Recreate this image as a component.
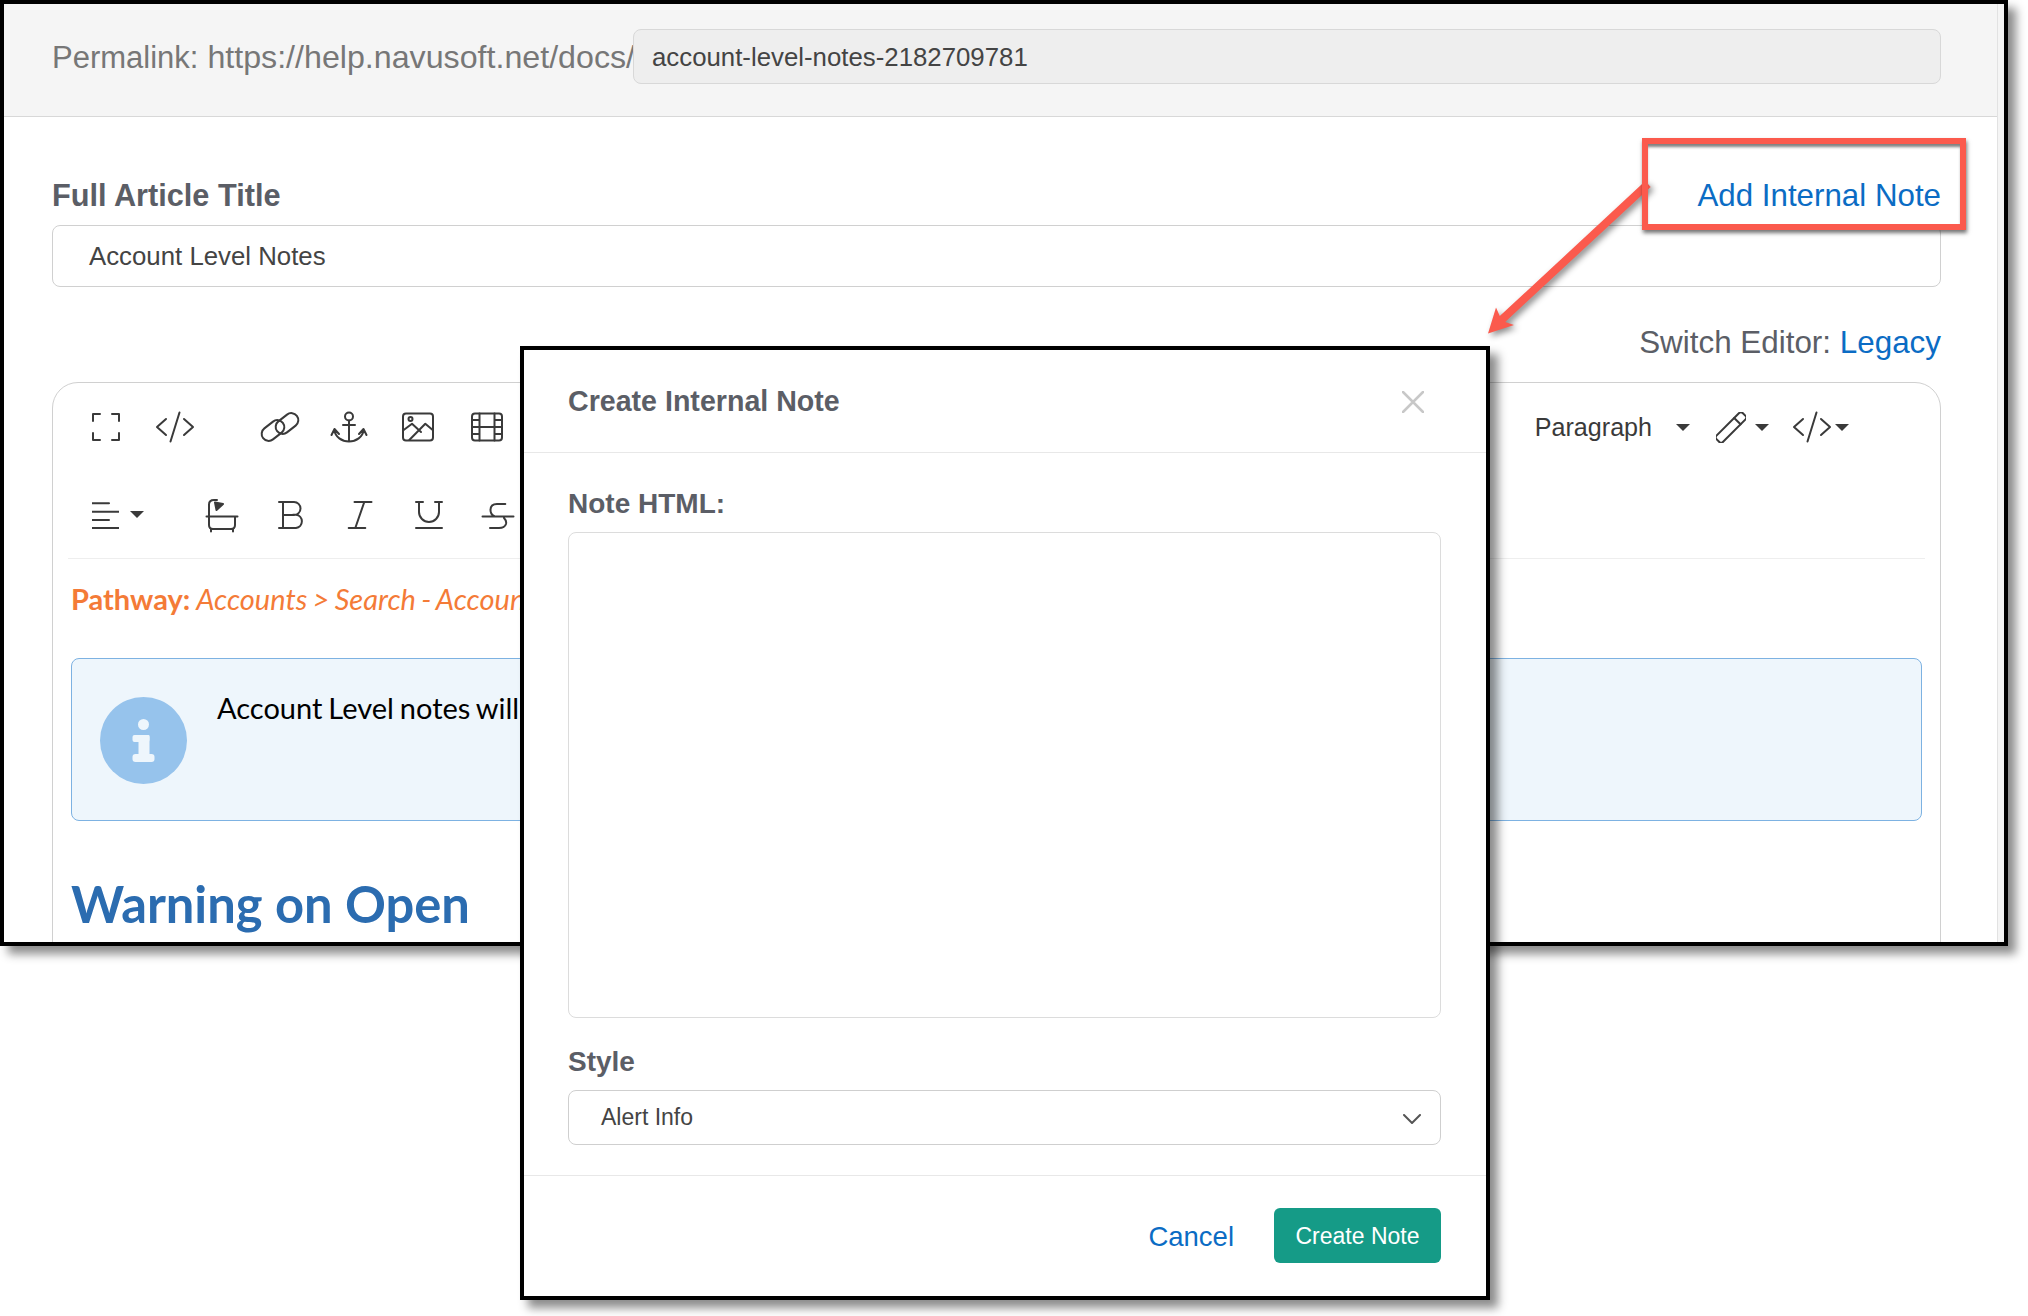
<div class="page">
  <div class="window">
    <div class="main">
      <div class="perma">
        <span class="perma-label"><span class="perma-word">Permalink:</span> https://help.navusoft.net/docs/</span>
        <div class="perma-input">account-level-notes-2182709781</div>
      </div>
      <div class="title-row">
        <span class="label-lg">Full Article Title</span>
        <a class="link" href="#note">Add Internal Note</a>
      </div>
      <div class="title-input">Account Level Notes</div>
      <div class="switch">Switch Editor: <a class="link" href="#legacy">Legacy</a></div>

      <div class="editor">
        <div class="toolbar">
          <div class="tool-row row1">
            <span class="tool"><svg viewBox="0 0 40 40"><path d="M7 14V7h7M26 7h7v7M7 26v7h7M26 33h7v-7"/></svg></span>
            <span class="tool"><svg viewBox="0 0 40 40"><path d="M11 12 2 20l9 8M29 12l9 8-9 8M24.500 5.500l-9 29"/></svg></span>
            <span class="tool group-start"><svg viewBox="0 0 40 40"><rect x="0.500" y="16.500" width="25" height="14" rx="7" transform="rotate(-38 13 23.500)"/><rect x="14.500" y="9.500" width="25" height="14" rx="7" transform="rotate(-38 27 16.500)"/></svg></span>
            <span class="tool"><svg viewBox="0 0 40 40"><circle cx="20" cy="9.500" r="4"/><path d="M20 13.500V34.500M14 18H26M5.500 23C6 30 13 34.500 20 34.500S34 30 34.500 23M2.500 28l3-6 4.500 5M30 27l4.500-5 3 6"/></svg></span>
            <span class="tool"><svg viewBox="0 0 40 40"><rect x="5" y="6.500" width="30" height="27" rx="3"/><circle cx="12.500" cy="12" r="2"/><path d="M5.700 23 14 16.700 23 25M11.300 33 27.300 16.700 34.700 23"/></svg></span>
            <span class="tool"><svg viewBox="0 0 40 40"><rect x="5" y="6.500" width="30" height="27" rx="3"/><path d="M12.500 6.500v27M27.500 6.500v27M5 13h7.500M5 20h30M5 27h7.500M27.500 13H35M27.500 27H35"/></svg></span>
            <div class="tool-right">
              <span class="para">Paragraph</span>
              <svg class="caret caret-a" viewBox="0 0 14 7"><path d="M0 0h14L7 7z"/></svg>
              <svg class="pencil" viewBox="0 0 30 31"><g transform="rotate(45 15 15.500)"><rect x="10.500" y="-3" width="9" height="37" rx="2.500"/><path d="M10.500 6.500h9"/></g></svg>
              <svg class="caret caret-b" viewBox="0 0 14 7"><path d="M0 0h14L7 7z"/></svg>
              <svg class="code-sm" viewBox="0 0 40 40"><path d="M11 12 2 20l9 8M29 12l9 8-9 8M24.500 5.500l-9 29"/></svg>
              <svg class="caret caret-c" viewBox="0 0 14 7"><path d="M0 0h14L7 7z"/></svg>
            </div>
          </div>
          <div class="tool-row row2">
            <span class="tool align-tool">
              <svg class="align" viewBox="0 0 27 40"><path d="M0 8.300h17M0 16.700h27M0 25h17M0 33h27"/></svg>
              <svg class="caret" viewBox="0 0 14 7"><path d="M0 0h14L7 7z"/></svg>
            </span>
            <span class="tool"><svg viewBox="0 0 40 40"><path d="M4.500 21.500h31M7 21.500V30q0 4 4 4h18q4 0 4-4v-8.500M9 34v2.500M31 34v2.500M7 21.500V9.500Q7 5 12 5h3"/><path class="fill" d="M13 7.500 21 9l-6.500 6z"/></svg></span>
            <span class="tool"><svg viewBox="0 0 40 40"><path d="M8 7H23a6.500 6.500 0 0 1 0 13H12M12 7V33M8 33H25a6.700 6.700 0 0 0 0-13.300H22"/></svg></span>
            <span class="tool"><svg viewBox="0 0 40 40"><path d="M14.500 7H31.500M8.700 33H25.300M24.300 7 15.300 33"/></svg></span>
            <span class="tool"><svg viewBox="0 0 40 40"><path d="M7 7h7M26 7h7M10 7V17a10 10 0 0 0 20 0V7M7 33H33"/></svg></span>
            <span class="tool"><svg viewBox="0 0 40 40"><path d="M27.300 9H19C14 9 12.500 12 12.500 15C12.500 18 14 20 16 21M4.500 21.500H35.500M26 23C28 25 28.500 27 28 29C27 32 24 33 21 33H12"/></svg></span>
          </div>
        </div>

        <div class="body">
          <p class="pathway"><strong>Pathway:</strong> <em>Accounts &gt; Search - Account</em></p>
          <div class="alert">
            <svg class="info" viewBox="0 0 87 87">
              <circle class="info-disc" cx="43.500" cy="43.500" r="43.500"/>
              <circle class="info-mark" cx="43.500" cy="27.500" r="5.500"/>
              <rect class="info-mark" x="32.500" y="38" width="17" height="7" rx="2"/>
              <rect class="info-mark" x="38.500" y="38" width="11" height="25" rx="1"/>
              <rect class="info-mark" x="32.500" y="57" width="22" height="8" rx="3"/>
            </svg>
            <span class="alert-text">Account Level notes will</span>
          </div>
          <h2>Warning on Open</h2>
        </div>
      </div>
    </div>
    <div class="strip"></div>
  </div>

  <svg class="arrow" viewBox="1470 170 200 180">
    <path class="arrow-shape" d="M1645.300 181.100 1650.700 186.900 1505.200 321.900 1514 325 1488 333.500 1496 307.500 1499.800 316.100Z"/>
  </svg>
  <div class="callout"></div>

  <div class="modal">
    <div class="modal-head">
      <span class="modal-title">Create Internal Note</span>
      <svg class="close" viewBox="0 0 22 22"><path d="M1 1l20 20M21 1 1 21"/></svg>
    </div>
    <div class="modal-body">
      <div class="label-md">Note HTML:</div>
      <div class="textarea"></div>
      <div class="label-md style-label">Style</div>
      <div class="select">
        <span>Alert Info</span>
        <svg viewBox="0 0 18 10"><path d="M1 1l8 8 8-8"/></svg>
      </div>
    </div>
    <div class="modal-foot">
      <a class="cancel" href="#cancel">Cancel</a>
      <button class="create">Create Note</button>
    </div>
  </div>
</div>

<style>
  :global(body) {
    margin: 0;
    background: #fff;
  }
  .page {
    position: relative;
    width: 2028px;
    height: 1316px;
    overflow: hidden;
    font-family: "Liberation Sans", Arial, sans-serif;
    color: #5b5e66;
  }
  .window {
    box-sizing: border-box;
    width: 2008px;
    height: 946px;
    border: 4px solid #000;
    background: #fff;
    display: flex;
    overflow: hidden;
    box-shadow: 8px 8px 9px rgba(0, 0, 0, 0.45);
  }
  .main {
    flex: 1;
    min-width: 0;
  }
  .strip {
    width: 6px;
    background: #f5f5f5;
    border-left: 1px solid #e2e2e2;
  }
  .perma {
    box-sizing: border-box;
    height: 113px;
    padding: 25px 56px 0 48px;
    display: flex;
    align-items: flex-start;
    background: #f5f5f5;
    border-bottom: 1px solid #d8d8d8;
  }
  .perma-label {
    font-size: 32.200px;
    line-height: 57px;
    color: #777;
    white-space: nowrap;
    width: 581px;
  }
  .perma-word {
    font-size: 31px;
  }
  .perma-input {
    flex: 1;
    box-sizing: border-box;
    height: 55px;
    line-height: 55px;
    padding-left: 18px;
    font-size: 25.800px;
    color: #444;
    background: #eee;
    border: 1px solid #d8d8d8;
    border-radius: 8px;
  }
  .title-row {
    display: flex;
    justify-content: space-between;
    margin: 61px 56px 11px 48px;
    line-height: 36px;
  }
  .label-lg {
    font-size: 30.700px;
    font-weight: 700;
  }
  .title-row .link {
    font-size: 31.300px;
  }
  .link {
    color: #0b6cc4;
    text-decoration: none;
  }
  .title-input {
    box-sizing: border-box;
    height: 62px;
    line-height: 60px;
    margin: 0 56px 0 48px;
    padding-left: 36px;
    font-size: 25.800px;
    color: #444;
    border: 1px solid #d0d0d0;
    border-radius: 8px;
  }
  .switch {
    margin: 38px 56px 21px 48px;
    line-height: 36px;
    font-size: 31.400px;
    text-align: right;
  }
  .editor {
    box-sizing: border-box;
    height: 600px;
    margin: 0 56px 0 48px;
    padding: 0 15px;
    border: 1px solid #d0d0d0;
    border-radius: 26px 26px 0 0;
  }
  .toolbar {
    border-bottom: 1px solid #eee;
  }
  .tool-row {
    display: flex;
    align-items: center;
  }
  .row1 {
    height: 88px;
    padding-left: 3px;
    padding-right: 76px;
  }
  .row2 {
    height: 87px;
    padding-left: 2px;
  }
  .tool {
    width: 69px;
    display: flex;
    align-items: center;
    justify-content: center;
  }
  .group-start {
    margin-left: 36px;
  }
  .tool svg,
  .code-sm,
  .pencil {
    width: 40px;
    height: 40px;
  }
  svg path,
  svg rect,
  svg circle {
    fill: none;
    stroke: #3a3a3a;
    stroke-width: 2;
    stroke-linecap: round;
    stroke-linejoin: round;
  }
  .tool .fill {
    fill: #3a3a3a;
  }
  .tool-right {
    margin-left: auto;
    display: flex;
    align-items: center;
  }
  .para {
    font-size: 25.100px;
    color: #3a3a3a;
  }
  .tool .caret,
  .caret {
    width: 14px;
    height: 7px;
  }
  .caret path {
    fill: #3a3a3a;
    stroke: none;
  }
  .caret-a {
    margin-left: 24px;
  }
  .pencil {
    width: 30px;
    height: 31px;
    margin-left: 26px;
  }
  .caret-b {
    margin-left: 9px;
  }
  .code-sm {
    margin-left: 23px;
    margin-right: 3px;
  }
  .caret-c {
    margin-left: 0;
  }
  .align-tool {
    width: 96px;
    padding-left: 22px;
    box-sizing: border-box;
    justify-content: flex-start;
    margin-right: 21px;
  }
  .tool .align {
    width: 27px;
    height: 40px;
    flex: none;
  }
  .align-tool .caret {
    margin-left: 11px;
    flex: none;
  }
  .body {
    padding: 0 3px;
    font-family: Lato, sans-serif;
  }
  .pathway {
    margin: 20px 0 39px;
    line-height: 40px;
    font-size: 29px;
    word-spacing: -1.500px;
    color: #f47b37;
    white-space: nowrap;
  }
  .alert {
    box-sizing: border-box;
    height: 163px;
    padding: 38px 28px 0;
    display: flex;
    align-items: flex-start;
    gap: 30px;
    background: #eef6fc;
    border: 1px solid #7db2e2;
    border-radius: 8px;
  }
  .info {
    width: 87px;
    height: 87px;
    flex: none;
  }
  .info .info-disc {
    fill: #96c3ec;
    stroke: none;
  }
  .info .info-mark {
    fill: #eef6fc;
    stroke: none;
  }
  .alert-text {
    margin-top: -9px;
    font-size: 29px;
    word-spacing: -1.500px;
    line-height: 40px;
    color: #000;
    white-space: nowrap;
  }
  h2 {
    margin: 53px 0 0;
    font-size: 50.700px;
    line-height: 60px;
    font-weight: 700;
    color: #2b6cb0;
  }
  .callout {
    position: absolute;
    left: 1642px;
    top: 138px;
    box-sizing: border-box;
    width: 324px;
    height: 92px;
    border: 6px solid #fb5a4d;
    box-shadow: 1px 3px 4px rgba(0, 0, 0, 0.55), inset 0 4px 3px -1px rgba(0, 0, 0, 0.5);
  }
  .arrow {
    position: absolute;
    left: 1470px;
    top: 170px;
    width: 200px;
    height: 180px;
    filter: drop-shadow(3px 3px 3px rgba(0, 0, 0, 0.45));
  }
  .arrow .arrow-shape {
    fill: #fb5a4d;
    stroke: none;
  }
  .modal {
    position: absolute;
    left: 520px;
    top: 346px;
    box-sizing: border-box;
    width: 970px;
    height: 954px;
    display: flex;
    flex-direction: column;
    border: 4px solid #000;
    background: #fff;
    box-shadow: 8px 8px 9px rgba(0, 0, 0, 0.45);
  }
  .modal-head {
    box-sizing: border-box;
    height: 103px;
    flex: none;
    padding: 2px 62px 0 44px;
    display: flex;
    align-items: center;
    justify-content: space-between;
    border-bottom: 1px solid #e8e8e8;
  }
  .modal-title {
    margin-top: -2px;
    font-size: 28.600px;
    font-weight: 700;
    color: #5b5e66;
  }
  .close {
    width: 22px;
    height: 22px;
  }
  .close path {
    stroke: #c8c8c8;
    stroke-width: 2.500;
  }
  .modal-body {
    flex: 1;
    padding: 0 45px 0 44px;
    border-bottom: 1px solid #e8e8e8;
  }
  .label-md {
    font-weight: 700;
    font-size: 28px;
    line-height: 36px;
    margin-top: 33px;
  }
  .textarea {
    box-sizing: border-box;
    height: 486px;
    margin-top: 10px;
    border: 1px solid #dcdcdc;
    border-radius: 8px;
  }
  .style-label {
    margin-top: 26px;
  }
  .select {
    box-sizing: border-box;
    height: 55px;
    margin-top: 10px;
    padding: 0 19px 0 32px;
    display: flex;
    align-items: center;
    justify-content: space-between;
    font-size: 23px;
    color: #444;
    border: 1px solid #cfcfcf;
    border-radius: 8px;
  }
  .select svg {
    width: 18px;
    height: 10px;
    margin-top: 2px;
  }
  .select path {
    stroke: #555;
  }
  .modal-foot {
    box-sizing: border-box;
    height: 120px;
    flex: none;
    padding: 32px 45px 0 0;
    display: flex;
    align-items: flex-start;
    justify-content: flex-end;
    gap: 40px;
  }
  .cancel {
    font-size: 27.500px;
    line-height: 57px;
    color: #0b6cc4;
    text-decoration: none;
  }
  .create {
    width: 167px;
    height: 55px;
    padding: 2px 0 0;
    font-family: inherit;
    font-size: 23px;
    color: #fff;
    background: #159b87;
    border: 0;
    border-radius: 6px;
  }
</style>
